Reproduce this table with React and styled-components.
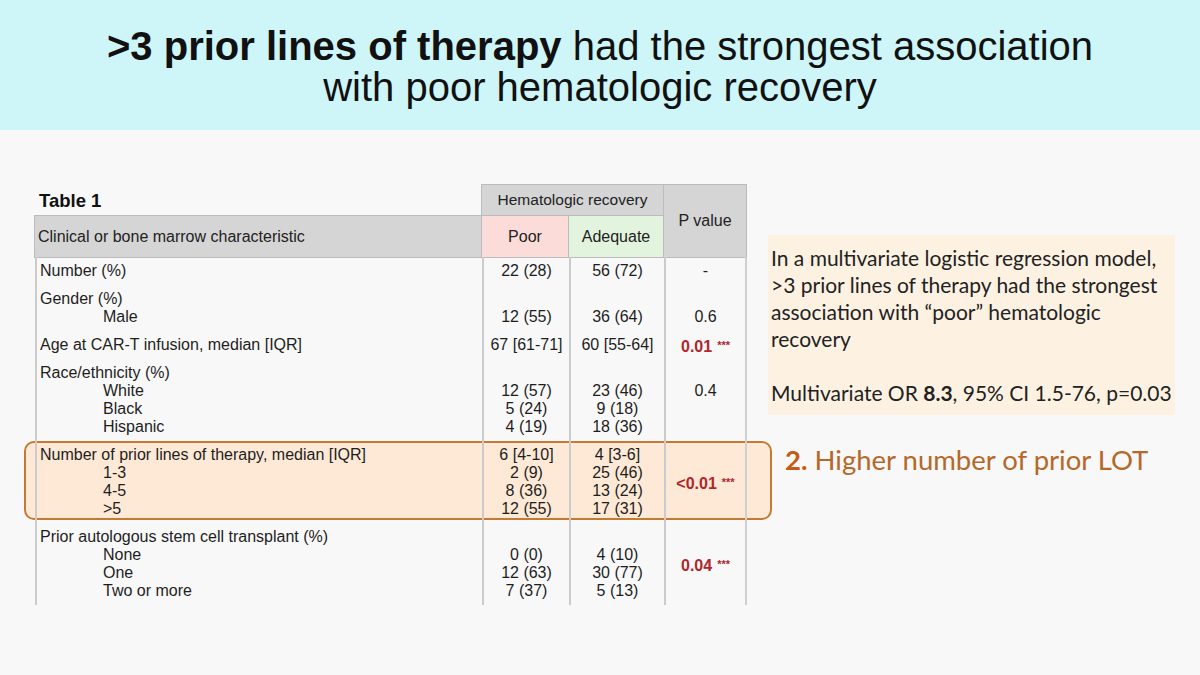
import React from "react";
import styled, { createGlobalStyle } from "styled-components";

const GlobalStyle = createGlobalStyle`
  html, body {
    margin: 0;
    padding: 0;
    background: #f8f8f8;
  }
  body {
    width: 1200px;
    height: 675px;
    overflow: hidden;
    font-family: "Liberation Sans", Arial, sans-serif;
    color: #1e1e1e;
  }
`;

const Slide = styled.div`
  width: 1200px;
  height: 675px;
  display: flex;
  flex-direction: column;
  background: #f8f8f8;
`;

const TitleBand = styled.header`
  height: 130px;
  box-sizing: border-box;
  padding-top: 26px;
  background: #cef6f8;
  text-align: center;
  font-family: "Liberation Sans Narrow", "Liberation Sans", Arial, sans-serif;
  font-size: 40px;
  line-height: 41px;
  color: #111;
`;

const Strong = styled.b`
  font-weight: 700;
`;

const Body = styled.main`
  display: flex;
  align-items: flex-start;
  padding: 54px 0 0 35px;
  gap: 21px;
`;

const Table = styled.div`
  width: 712px;
  display: flex;
  flex-direction: column;
  font-size: 16px;
`;

const HeadGrid = styled.div`
  display: grid;
  grid-template-columns: 447px 87px 95px 83px;
  grid-template-rows: 31px 42px;
`;

const Caption = styled.div`
  grid-column: 1;
  grid-row: 1;
  display: flex;
  align-items: center;
  padding: 2px 0 0 4px;
  font-size: 18.5px;
  font-weight: 700;
  color: #111;
`;

const HeadCell = styled.div`
  display: flex;
  align-items: center;
  justify-content: ${(p) => (p.$left ? "flex-start" : "center")};
  padding-left: ${(p) => (p.$left ? "3px" : "0")};
  background: ${(p) => p.$bg || "#d5d5d5"};
  border: 1px solid #bcbcbc;
  margin: 0 0 -1px -1px;
  font-size: ${(p) => p.$size || "16px"};
  color: #222;
  grid-column: ${(p) => p.$col};
  grid-row: ${(p) => p.$row};
`;

const Group = styled.div`
  position: relative;
  isolation: isolate;
  display: grid;
  grid-template-columns: 447px 87px 95px 83px;

  ${(p) =>
    p.$highlight &&
    `
    &::before {
      content: "";
      position: absolute;
      left: -11px;
      right: -25px;
      top: 0;
      bottom: 3px;
      border: 2.5px solid #c47a33;
      border-radius: 10px;
      background: #fde9d5;
      z-index: -1;
    }
  `}
`;

const Col = styled.div`
  display: flex;
  flex-direction: column;
  justify-content: ${(p) => (p.$center ? "center" : "flex-start")};
  align-items: ${(p) => (p.$left ? "stretch" : "center")};
  padding: 5px 0 5px ${(p) => (p.$left ? "3px" : "0")};
  border-left: 2px solid #cbcbcb;
  border-right: ${(p) => (p.$last ? "2px solid #cfcfcf" : "none")};
`;

const Line = styled.div`
  height: 18px;
  line-height: 18px;
  white-space: nowrap;
  padding-left: ${(p) => (p.$sub ? "63px" : "0")};
  color: #1e1e1e;
`;

const PValue = styled.span`
  font-weight: ${(p) => (p.$sig ? 700 : 400)};
  color: ${(p) => (p.$sig ? "#b0262c" : "#1e1e1e")};
`;

const Stars = styled.span`
  font-size: 11px;
  font-weight: 700;
  color: #b0262c;
  margin-left: 5px;
  vertical-align: 3px;
`;

const Side = styled.aside`
  display: flex;
  flex-direction: column;
  padding-top: 51px;
`;

const Note = styled.div`
  width: 407px;
  height: 180px;
  box-sizing: border-box;
  padding: 9px 0 0 3px;
  background: #fdf2e2;
  font-family: Lato, "Open Sans", sans-serif;
  font-size: 21px;
  line-height: 27px;
  color: #222;
`;

const Gap = styled.div`
  height: 27px;
`;

const Callout = styled.div`
  margin: 28px 0 0 17px;
  font-family: Lato, "Open Sans", sans-serif;
  font-size: 27.5px;
  color: #b4692a;
`;

const CalloutNum = styled.b`
  color: #c65b12;
  font-weight: 700;
`;

const groups = [
  { lines: [{ t: "Number (%)", poor: "22 (28)", adeq: "56 (72)" }], p: "-", pLine: 0 },
  {
    lines: [{ t: "Gender (%)" }, { t: "Male", sub: true, poor: "12 (55)", adeq: "36 (64)" }],
    p: "0.6",
    pLine: 1,
  },
  {
    lines: [{ t: "Age at CAR-T infusion, median [IQR]", poor: "67 [61-71]", adeq: "60 [55-64]" }],
    p: "0.01",
    sig: true,
    pLine: 0,
  },
  {
    lines: [
      { t: "Race/ethnicity (%)" },
      { t: "White", sub: true, poor: "12 (57)", adeq: "23 (46)" },
      { t: "Black", sub: true, poor: "5 (24)", adeq: "9 (18)" },
      { t: "Hispanic", sub: true, poor: "4 (19)", adeq: "18 (36)" },
    ],
    p: "0.4",
    pLine: 1,
  },
  {
    lines: [
      { t: "Number of prior lines of therapy, median [IQR]", poor: "6 [4-10]", adeq: "4 [3-6]" },
      { t: "1-3", sub: true, poor: "2 (9)", adeq: "25 (46)" },
      { t: "4-5", sub: true, poor: "8 (36)", adeq: "13 (24)" },
      { t: ">5", sub: true, poor: "12 (55)", adeq: "17 (31)" },
    ],
    p: "<0.01",
    sig: true,
    highlight: true,
  },
  {
    lines: [
      { t: "Prior autologous stem cell transplant (%)" },
      { t: "None", sub: true, poor: "0 (0)", adeq: "4 (10)" },
      { t: "One", sub: true, poor: "12 (63)", adeq: "30 (77)" },
      { t: "Two or more", sub: true, poor: "7 (37)", adeq: "5 (13)" },
    ],
    p: "0.04",
    sig: true,
  },
];

const P = ({ g }) => (
  <Line>
    <PValue $sig={g.sig}>{g.p}</PValue>
    {g.sig && <Stars>***</Stars>}
  </Line>
);

const Row = ({ g }) => {
  const centered = g.pLine === undefined;
  return (
    <Group $highlight={g.highlight}>
      <Col $left>
        {g.lines.map((l, i) => (
          <Line key={i} $sub={l.sub}>
            {l.t}
          </Line>
        ))}
      </Col>
      <Col>
        {g.lines.map((l, i) => (
          <Line key={i}>{l.poor || ""}</Line>
        ))}
      </Col>
      <Col>
        {g.lines.map((l, i) => (
          <Line key={i}>{l.adeq || ""}</Line>
        ))}
      </Col>
      <Col $last $center={centered}>
        {centered ? (
          <P g={g} />
        ) : (
          g.lines.map((l, i) => (i === g.pLine ? <P key={i} g={g} /> : <Line key={i} />))
        )}
      </Col>
    </Group>
  );
};

export default function App() {
  return (
    <Slide>
      <GlobalStyle />
      <TitleBand>
        <Strong>&gt;3 prior lines of therapy</Strong> had the strongest association
        <br />
        with poor hematologic recovery
      </TitleBand>
      <Body>
        <Table>
          <HeadGrid>
            <Caption>Table 1</Caption>
            <HeadCell $col="2 / 4" $row="1" $size="15.5px">
              Hematologic recovery
            </HeadCell>
            <HeadCell $col="4" $row="1 / 3">
              P value
            </HeadCell>
            <HeadCell $col="1" $row="2" $left>
              Clinical or bone marrow characteristic
            </HeadCell>
            <HeadCell $col="2" $row="2" $bg="#fcdcd8">
              Poor
            </HeadCell>
            <HeadCell $col="3" $row="2" $bg="#e3f4de">
              Adequate
            </HeadCell>
          </HeadGrid>
          {groups.map((g, i) => (
            <Row key={i} g={g} />
          ))}
        </Table>
        <Side>
          <Note>
            In a multivariate logistic regression model,
            <br />
            &gt;3 prior lines of therapy had the strongest
            <br />
            association with “poor” hematologic
            <br />
            recovery
            <Gap />
            Multivariate OR <b>8.3</b>, 95% CI 1.5-76, p=0.03
          </Note>
          <Callout>
            <CalloutNum>2.</CalloutNum> Higher number of prior LOT
          </Callout>
        </Side>
      </Body>
    </Slide>
  );
}
